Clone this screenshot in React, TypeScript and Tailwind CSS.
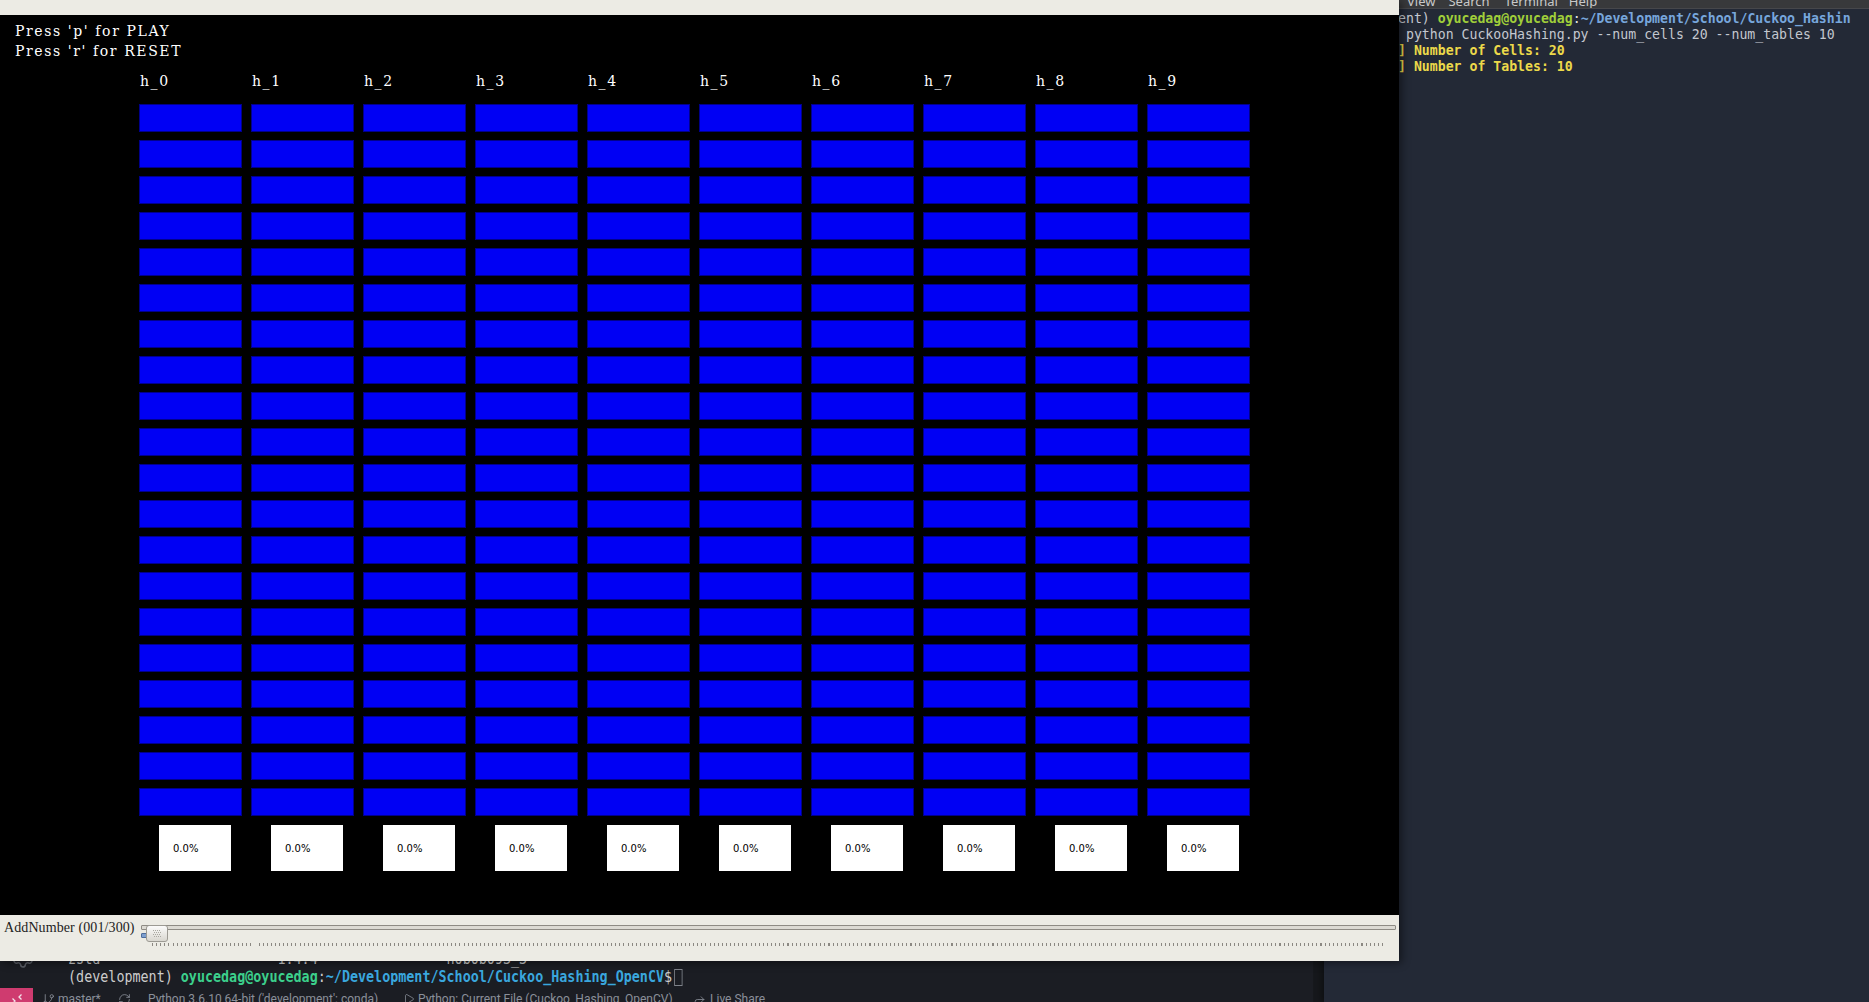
import { Settings, GitBranch, RefreshCw, Play, Forward } from 'lucide-react';

const TABLES = Array.from({ length: 10 }, (_, i) => i);
const CELLS = Array.from({ length: 20 }, (_, i) => i);

function HashColumn({ index }: { index: number }) {
  return (
    <div className="flex w-[103px] flex-col">
      <div className="h-[20px] pl-[1px] font-['DejaVu_Serif',serif] text-[14px] leading-[20px] tracking-[1.6px] text-white">
        h_{index}
      </div>
      <div className="mt-[13px] flex flex-col gap-[8px]">
        {CELLS.map((c) => (
          <div key={c} className="h-[28px] border border-[#00008c] bg-[#0000f4]" />
        ))}
      </div>
      <div className="ml-[20px] mt-[9px] flex h-[46px] w-[72px] items-center bg-white pl-[14px] font-['DejaVu_Sans',sans-serif] text-[10px] text-black">
        0.0%
      </div>
    </div>
  );
}

function Slider() {
  return (
    <div className="flex h-[46px] bg-[#ecebe4]">
      <div className="w-[141px] shrink-0 pl-[4px] pt-[5px] font-['Liberation_Serif',serif] text-[14px] leading-[16px] tracking-[0.1px] text-[#1c1c1c]">
        AddNumber (001/300)
      </div>
      <div className="flex-1 pr-[3px] pt-[2px]">
        <div className="relative h-[17px]">
          <div className="mt-[8px] h-[5px] w-full rounded-[1px] border border-[#8e8b84] bg-[#dcdad3]" />
          <div className="absolute left-0 top-[8px] h-[5px] w-[8px] rounded-[1px] border border-[#4d6d9c] bg-[#7d9fcf]" />
          <div className="absolute left-[5px] top-0 flex h-[17px] w-[22px] items-center justify-center rounded-[3px] border border-[#9c9a93] bg-gradient-to-b from-[#fbfbfa] to-[#d9d7d0]">
            <svg width="8" height="8" viewBox="0 0 8 8">
              {[0, 2, 4, 6].map((y) =>
                [0, 2, 4, 6].map((x) => (
                  <rect key={`${x}-${y}`} x={x + ((y / 2) % 2)} y={y} width="1" height="1" fill="#a9a7a0" />
                ))
              )}
            </svg>
          </div>
        </div>
        <div className="ml-[11px] mr-[12px] mt-[1px] h-[3px] bg-[image:repeating-linear-gradient(90deg,#8b8882_0px,#8b8882_1px,transparent_1px,transparent_4.1px)]" />
      </div>
    </div>
  );
}

function OpenCvWindow() {
  return (
    <div className="absolute left-0 top-0 flex h-[961px] w-[1399px] flex-col shadow-[3px_2px_8px_rgba(0,0,0,0.45)]">
      <div className="h-[15px] bg-[#ecebe4]" />
      <div className="h-[900px] bg-black">
        <div className="pl-[15px] pt-[6px] font-['DejaVu_Serif',serif] text-[14px] leading-[20px] tracking-[1.6px] text-white">
          <div>Press 'p' for PLAY</div>
          <div>Press 'r' for RESET</div>
        </div>
        <div className="mt-[10px] flex gap-[9px] pl-[139px]">
          {TABLES.map((t) => (
            <HashColumn key={t} index={t} />
          ))}
        </div>
      </div>
      <Slider />
    </div>
  );
}

function TerminalWindow() {
  return (
    <div className="absolute inset-y-0 left-[1324px] right-0 bg-[#232936] shadow-[-3px_0_6px_rgba(0,0,0,0.35)]">
      <div className="h-[9px] overflow-hidden border-b border-[#46474b] bg-[#38393b]">
        <div className="-mt-[8px] flex pl-[83px] font-['Noto_Sans',sans-serif] text-[13px] leading-[18px] text-[#c9c9c9]">
          <span>View</span>
          <span className="ml-[13px]">Search</span>
          <span className="ml-[15px]">Terminal</span>
          <span className="ml-[11px]">Help</span>
        </div>
      </div>
      <div className="whitespace-pre pl-[74px] pt-[2px] font-['DejaVu_Sans_Mono',monospace] text-[13.2px] leading-[16px] text-[#c3c7cf]">
        <div>
          ent){' '}
          <span className="font-bold text-[#a0cf3a]">oyucedag@oyucedag</span>
          <span className="text-[#e6e6e6]">:</span>
          <span className="font-bold text-[#77a6dc]">~/Development/School/Cuckoo_Hashin</span>
        </div>
        <div> python CuckooHashing.py --num_cells 20 --num_tables 10</div>
        <div className="font-bold text-[#ecd94a]">] Number of Cells: 20</div>
        <div className="font-bold text-[#ecd94a]">] Number of Tables: 10</div>
      </div>
    </div>
  );
}

function RemoteIcon() {
  return (
    <svg width="12" height="12" viewBox="0 0 12 12" fill="none" stroke="#f3e3ea" strokeWidth="1.3">
      <path d="M1.5 5.5 L4 8 L1.5 10.5" />
      <path d="M10.5 1.5 L8 4 L10.5 6.5" />
    </svg>
  );
}

function VsCodeWindow() {
  return (
    <div className="absolute left-0 top-0 flex h-[1010px] w-[1324px] bg-[#1b1d23]">
      <div className="flex flex-1 flex-col justify-end">
        <div className="flex">
          <div className="w-[48px] shrink-0">
            <Settings size={24} strokeWidth={1.5} className="-mt-[5px] ml-[11px] text-[#5b5f67]" />
          </div>
          <div className="origin-left scale-x-[0.836] whitespace-pre pl-[24px] font-['DejaVu_Sans_Mono',monospace] text-[16px] leading-[18px] text-[#cccccc]">
            <div>{'zstd'.padEnd(26, ' ') + '1.4.4'.padEnd(21, ' ') + 'h0b0b093_3'}</div>
            <div className="flex items-center">
              <span>(development) </span>
              <span className="font-bold text-[#3cd08c]">oyucedag@oyucedag</span>
              <span>:</span>
              <span className="font-bold text-[#3aa7de]">~/Development/School/Cuckoo_Hashing_OpenCV</span>
              <span>$</span>
              <span className="ml-[3px] inline-block h-[17px] w-[9.6px] border border-[#7f838a]" />
            </div>
          </div>
        </div>
        <div className="mt-[2px] flex h-[22px] items-center font-['Roboto',sans-serif] text-[12px] text-[#8b909a]">
          <div className="flex h-full w-[33px] items-center justify-center bg-[#cf3b6f]">
            <RemoteIcon />
          </div>
          <div className="flex w-[79px] items-center gap-[3px] pl-[9px]">
            <GitBranch size={13} strokeWidth={1.5} />
            <span>master*</span>
          </div>
          <div className="flex w-[30px] items-center pl-[6px]">
            <RefreshCw size={13} strokeWidth={1.5} />
          </div>
          <div className="w-[255px] pl-[6px]">Python 3.6.10 64-bit ('development': conda)</div>
          <div className="flex w-[290px] items-center gap-[3px] pl-[6px]">
            <Play size={12} strokeWidth={1.5} />
            <span>Python: Current File (Cuckoo_Hashing_OpenCV)</span>
          </div>
          <div className="flex items-center gap-[4px] pl-[6px]">
            <Forward size={13} strokeWidth={1.5} />
            <span>Live Share</span>
          </div>
        </div>
      </div>
      <div className="w-[11px] shrink-0 bg-[#16181c]" />
    </div>
  );
}

export default function App() {
  return (
    <div className="relative h-[1002px] w-[1869px] overflow-hidden bg-[#232936]">
      <VsCodeWindow />
      <TerminalWindow />
      <OpenCvWindow />
    </div>
  );
}
